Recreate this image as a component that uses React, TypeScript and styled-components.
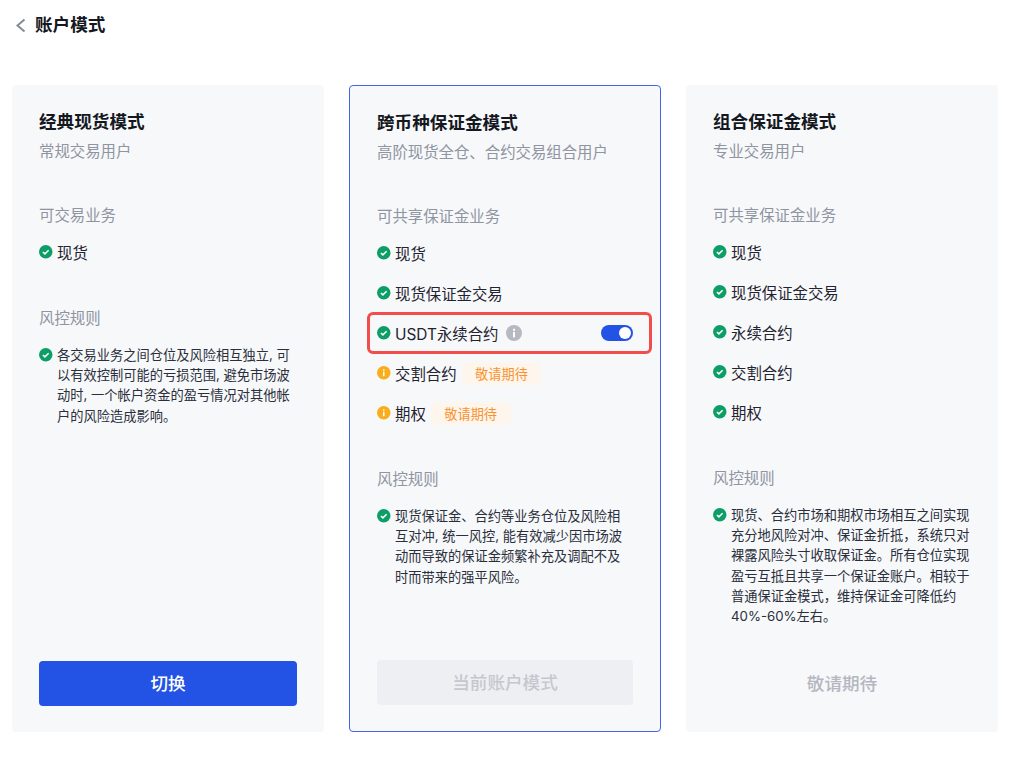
import styled, { createGlobalStyle } from "styled-components";

const GlobalStyle = createGlobalStyle`
  html, body {
    margin: 0;
    padding: 0;
    background: #fff;
    font-family: Inter, "Noto Sans CJK SC", sans-serif;
  }
  * {
    box-sizing: border-box;
  }
`;

const Page = styled.div`
  width: 1024px;
  height: 773px;
  padding: 0 26px 0 12px;
  overflow: hidden;
`;

const Header = styled.div`
  height: 85px;
  padding: 13px 0 0 2px;
  display: flex;
  align-items: flex-start;
  gap: 7px;
`;

const PageTitle = styled.h1`
  margin: 0;
  font-size: 17.6px;
  line-height: 24px;
  font-weight: 600;
  color: #15181f;
`;

const BackIcon = styled.svg`
  width: 14px;
  height: 24px;
  color: #868b98;
`;

const Cards = styled.div`
  display: grid;
  grid-template-columns: repeat(3, 312px);
  gap: 25px;
`;

const Card = styled.div<{ $active?: boolean }>`
  height: 647px;
  padding: 27px 27px 26px;
  display: flex;
  flex-direction: column;
  background: #f7f8fa;
  border-radius: 4px;
  border: ${(p) => (p.$active ? "1px solid #3f66ec" : "none")};
`;

const CardTitle = styled.h2`
  margin: 0;
  font-size: 17.6px;
  line-height: 20px;
  font-weight: 600;
  color: #15181f;
`;

const CardSubtitle = styled.p`
  margin: 10px 0 0;
  font-size: 15.4px;
  line-height: 20px;
  color: #8f94a1;
`;

const SectionLabel = styled.div<{ $gap: number }>`
  margin-top: ${(p) => p.$gap}px;
  font-size: 15.4px;
  line-height: 20px;
  color: #8f94a1;
`;

const ItemList = styled.div`
  margin-top: 14px;
  display: flex;
  flex-direction: column;
  gap: 16px;
`;

const Item = styled.div<{ $highlight?: boolean }>`
  position: relative;
  height: 24px;
  display: flex;
  align-items: center;
  font-size: 15.4px;
  color: #1f2430;

  ${(p) =>
    p.$highlight &&
    `
    &::after {
      content: "";
      position: absolute;
      left: -10px;
      right: -19px;
      top: -9px;
      bottom: -9px;
      border: 3.5px solid #f34d4b;
      border-radius: 6px;
      pointer-events: none;
    }
  `}
`;

const ItemIcon = styled.svg`
  flex: none;
  width: 13.5px;
  height: 13.5px;
  margin-right: 4.5px;
`;

const InfoIcon = styled.svg`
  flex: none;
  width: 16px;
  height: 16px;
  margin-left: 7px;
`;

const SoonTag = styled.span`
  margin-left: 5px;
  height: 23px;
  padding: 0 13.5px;
  display: flex;
  align-items: center;
  border-radius: 4px;
  background: #fef5ec;
  color: #f7932e;
  font-size: 13.2px;
`;

const Toggle = styled.div`
  margin-left: auto;
  width: 32px;
  height: 16px;
  padding: 2px;
  display: flex;
  justify-content: flex-end;
  border-radius: 8px;
  background: #2353e4;
`;

const ToggleKnob = styled.span`
  width: 12px;
  height: 12px;
  border-radius: 50%;
  background: #fff;
`;

const RuleRow = styled.div`
  margin-top: 16px;
  display: flex;
  align-items: flex-start;
`;

const RuleIcon = styled(ItemIcon)`
  margin-top: 3px;
`;

const RuleText = styled.p`
  margin: 0;
  font-size: 13.25px;
  line-height: 20.2px;
  color: #2a2f3b;
`;

const Footer = styled.div`
  margin-top: auto;
`;

const PrimaryButton = styled.button`
  width: 100%;
  height: 45px;
  padding: 0 0 3px;
  border: none;
  border-radius: 4px;
  background: #2353e4;
  color: #fff;
  font: 500 17.6px Inter, "Noto Sans CJK SC", sans-serif;
`;

const DisabledButton = styled(PrimaryButton)`
  background: #eeeff3;
  color: #c5c7ce;
`;

const SoonButton = styled(PrimaryButton)`
  background: transparent;
  color: #b4b7c0;
`;

const CheckIcon = () => (
  <ItemIcon viewBox="0 0 14 14">
    <circle cx="7" cy="7" r="7" fill="#0d9d67" />
    <path d="M4 7.2l2.1 2 3.9-3.8" fill="none" stroke="#fff" strokeWidth="1.5" />
  </ItemIcon>
);

const WarnIcon = () => (
  <ItemIcon viewBox="0 0 14 14">
    <circle cx="7" cy="7" r="7" fill="#f8ad19" />
    <rect x="6.2" y="6" width="1.6" height="4.6" fill="#fff" />
    <rect x="6.2" y="3.4" width="1.6" height="1.6" fill="#fff" />
  </ItemIcon>
);

const RuleCheck = () => (
  <RuleIcon viewBox="0 0 14 14">
    <circle cx="7" cy="7" r="7" fill="#0d9d67" />
    <path d="M4 7.2l2.1 2 3.9-3.8" fill="none" stroke="#fff" strokeWidth="1.5" />
  </RuleIcon>
);

const spot = "现货";
const margin = "现货保证金交易";
const perp = "永续合约";
const delivery = "交割合约";
const options = "期权";

const App = () => {
  return (
    <Page>
      <GlobalStyle />
      <Header>
        <BackIcon viewBox="0 0 14 24">
          <path d="M10.5 6.5L3.5 12.5l7 6" fill="none" stroke="currentColor" strokeWidth="2" />
        </BackIcon>
        <PageTitle>账户模式</PageTitle>
      </Header>

      <Cards>
        <Card>
          <CardTitle>经典现货模式</CardTitle>
          <CardSubtitle>常规交易用户</CardSubtitle>
          <SectionLabel $gap={44}>可交易业务</SectionLabel>
          <ItemList>
            <Item><CheckIcon />{spot}</Item>
          </ItemList>
          <SectionLabel $gap={45}>风控规则</SectionLabel>
          <RuleRow>
            <RuleCheck />
            <RuleText>
              各交易业务之间仓位及风险相互独立, 可以有效控制可能的亏损范围, 避免市场波动时, 一个帐户资金的盈亏情况对其他帐户的风险造成影响。
            </RuleText>
          </RuleRow>
          <Footer>
            <PrimaryButton>切换</PrimaryButton>
          </Footer>
        </Card>

        <Card $active>
          <CardTitle>跨币种保证金模式</CardTitle>
          <CardSubtitle>高阶现货全仓、合约交易组合用户</CardSubtitle>
          <SectionLabel $gap={44}>可共享保证金业务</SectionLabel>
          <ItemList>
            <Item><CheckIcon />{spot}</Item>
            <Item><CheckIcon />{margin}</Item>
            <Item $highlight>
              <CheckIcon />USDT{perp}
              <InfoIcon viewBox="0 0 16 16">
                <circle cx="8" cy="8" r="8" fill="#b7b9c2" />
                <rect x="7" y="7" width="2" height="5.4" fill="#fff" />
                <rect x="7" y="3.8" width="2" height="2" fill="#fff" />
              </InfoIcon>
              <Toggle><ToggleKnob /></Toggle>
            </Item>
            <Item><WarnIcon />{delivery}<SoonTag>敬请期待</SoonTag></Item>
            <Item><WarnIcon />{options}<SoonTag>敬请期待</SoonTag></Item>
          </ItemList>
          <SectionLabel $gap={45}>风控规则</SectionLabel>
          <RuleRow>
            <RuleCheck />
            <RuleText>
              现货保证金、合约等业务仓位及风险相互对冲, 统一风控, 能有效减少因市场波动而导致的保证金频繁补充及调配不及时而带来的强平风险。
            </RuleText>
          </RuleRow>
          <Footer>
            <DisabledButton disabled>当前账户模式</DisabledButton>
          </Footer>
        </Card>

        <Card>
          <CardTitle>组合保证金模式</CardTitle>
          <CardSubtitle>专业交易用户</CardSubtitle>
          <SectionLabel $gap={44}>可共享保证金业务</SectionLabel>
          <ItemList>
            <Item><CheckIcon />{spot}</Item>
            <Item><CheckIcon />{margin}</Item>
            <Item><CheckIcon />{perp}</Item>
            <Item><CheckIcon />{delivery}</Item>
            <Item><CheckIcon />{options}</Item>
          </ItemList>
          <SectionLabel $gap={45}>风控规则</SectionLabel>
          <RuleRow>
            <RuleCheck />
            <RuleText>
              现货、合约市场和期权市场相互之间实现充分地风险对冲、保证金折抵，系统只对裸露风险头寸收取保证金。所有仓位实现盈亏互抵且共享一个保证金账户。相较于普通保证金模式，维持保证金可降低约40%-60%左右。
            </RuleText>
          </RuleRow>
          <Footer>
            <SoonButton disabled>敬请期待</SoonButton>
          </Footer>
        </Card>
      </Cards>
    </Page>
  );
};

export default App;
